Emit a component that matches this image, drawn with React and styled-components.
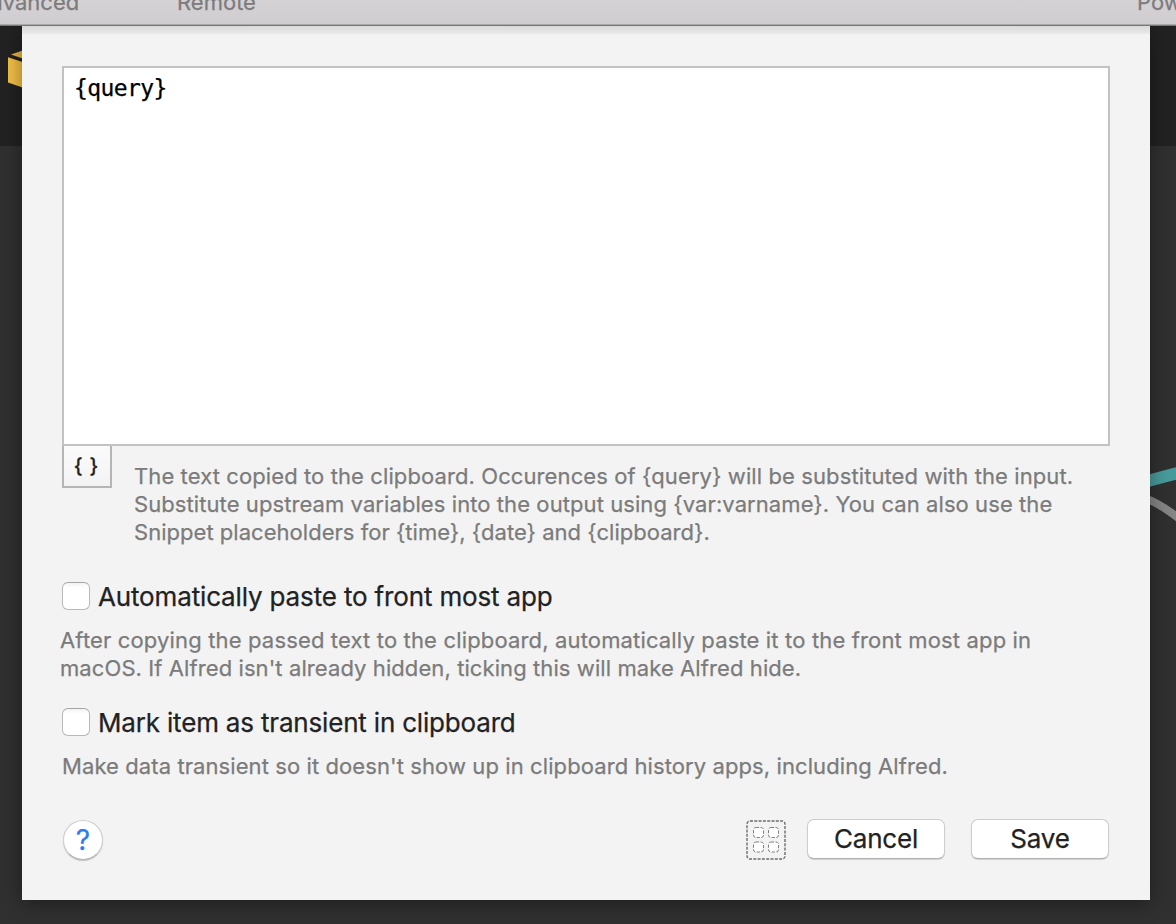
import React from "react";
import styled, { createGlobalStyle } from "styled-components";

const GlobalStyle = createGlobalStyle`
  * { box-sizing: border-box; }
  body {
    margin: 0;
    font-family: Inter, "Liberation Sans", sans-serif;
    font-weight: 400;
    -webkit-text-stroke: 0.25px currentColor;
  }
  button { font: inherit; padding: 0; margin: 0; }
`;

const Window = styled.div`
  position: relative;
  width: 1176px;
  height: 924px;
  overflow: hidden;
  display: flex;
  flex-direction: column;
  background: linear-gradient(#222 0 146px, #303030 146px);
`;

const Toolbar = styled.header`
  flex: none;
  height: 26px;
  display: flex;
  position: relative;
  z-index: 2;
  background: linear-gradient(#d5d2d5, #cfcdcf);
  border-bottom: 1px solid #777;
  box-shadow: inset 0 -1px 0 #aaa8aa;
`;

const Tab = styled.span`
  flex: none;
  width: ${(p) => p.$width}px;
  margin-top: -11px;
  margin-left: ${(p) => p.$offset || 0}px;
  font-size: 22px;
  line-height: 27px;
  color: #7d7b7d;
  white-space: nowrap;
`;

const Canvas = styled.svg`
  position: absolute;
  inset: 0;
`;

const Sheet = styled.main`
  position: relative;
  width: 1128px;
  height: 874px;
  margin-left: 22px;
  padding: 40px 40px 0;
  display: flex;
  flex-direction: column;
  background: linear-gradient(#dadada, #e1e1e1 4px, #ebebeb 8px, #f3f3f3 8px);
  box-shadow: 0 3px 20px rgba(0, 0, 0, 0.4);
`;

const Editor = styled.div`
  flex: none;
  height: 380px;
  width: 1048px;
  padding: 7px 10px;
  border: 2px solid #c2c2c2;
  background: #fff;
  color: #000;
  font: 23px/26px "DejaVu Sans Mono", monospace;
  letter-spacing: -0.6px;
`;

const EditorFooter = styled.div`
  display: flex;
  height: 136px;
`;

const Placeholder = styled.button`
  width: 50px;
  height: 42px;
  border: 2px solid #b5b5b5;
  border-top: 0;
  background: linear-gradient(#fbfbfb, #f3f3f3);
  color: #222;
  font-size: 20px;
  font-weight: 500;
  line-height: 40px;
  letter-spacing: 0.9px;
  padding-right: 1px;
`;

const Note = styled.div`
  margin: ${(p) => p.$margin || 0};
  color: #7b7b7b;
  font-size: 22px;
  line-height: 28px;
`;

const Line = styled.span`
  display: block;
  width: max-content;
  white-space: pre;
  letter-spacing: ${(p) => p.$track || 0}px;
`;

const Option = styled.label`
  display: flex;
  align-items: center;
  gap: 8px;
  height: 28px;
  color: #222;
  font-size: 26px;
  line-height: 30px;

  ${Line} { padding-top: 2px; }
`;

const Checkbox = styled.input`
  appearance: none;
  flex: none;
  width: 28px;
  height: 28px;
  margin: 0;
  border: 1px solid #b8b8b8;
  border-top-color: #a5a5a5;
  border-radius: 6px;
  background: linear-gradient(#f3f3f3, #fff 5px);
`;

const Actions = styled.footer`
  display: flex;
  align-items: center;
  height: 42px;
  margin-top: 39px;
  padding-right: 1px;
`;

const Help = styled.button`
  width: 40px;
  height: 40px;
  margin-left: 1px;
  margin-right: auto;
  border: 1px solid #cfcfcf;
  border-bottom-color: #b5b5b5;
  border-radius: 50%;
  background: #fff;
  box-shadow: 0 1px 1px rgba(0, 0, 0, 0.2);
  color: #2b7bf6;
  font-size: 28px;
  line-height: 38px;
`;

const PushButton = styled.button`
  width: 138px;
  height: 40px;
  margin-left: ${(p) => p.$gap}px;
  margin-bottom: 2px;
  border: 1px solid #cdcdcd;
  border-bottom-color: #b0b0b0;
  border-radius: 7px;
  background: #fff;
  box-shadow: 0 1px 1px rgba(0, 0, 0, 0.14);
  color: #222;
  font-size: 26px;
  line-height: 38px;
  letter-spacing: -0.2px;
`;

function Workflow() {
  return (
    <Canvas width="1176" height="924" fill="none">
      <path d="M11 54.5 24 50v9z" fill="#e8b641" />
      <path d="M8 57.3 24 62.5V88L8 82.5z" fill="#f2bf46" />
      <path d="M1148 481Q1162 477 1178 473" stroke="#489b9c" strokeWidth="12" />
      <path d="M1144 498Q1160 503 1182 521" stroke="#858585" strokeWidth="8" />
    </Canvas>
  );
}

function GridIcon() {
  const cells = [[7.5, 7.5], [22.5, 7.5], [7.5, 22], [22.5, 22]];
  return (
    <svg width="40" height="40" fill="none">
      <rect x="1" y="1" width="38" height="38" rx="3" stroke="#6c6c6c" strokeWidth="1.4" strokeDasharray="3 1.3" />
      {cells.map(([x, y]) => (
        <rect key={`${x}-${y}`} x={x} y={y} width="10" height="10" rx="2.4" fill="#fff" stroke="#808080" strokeDasharray="3.2 1.4" />
      ))}
    </svg>
  );
}

export default function App() {
  return (
    <>
      <GlobalStyle />
      <Window>
        <Workflow />
        <Toolbar>
          <Tab $width={203} $offset={-26}>Advanced</Tab>
          <Tab $width={960}>Remote</Tab>
          <Tab $width={140}>Powerpack</Tab>
        </Toolbar>
        <Sheet>
          <Editor>{"{query}"}</Editor>
          <EditorFooter>
            <Placeholder>{"{ }"}</Placeholder>
            <Note $margin="16px 0 0 22px">
              <Line $track={0.1}>{"The text copied to the clipboard. Occurences of {query} will be substituted with the input."}</Line>
              <Line $track={0.08}>{"Substitute upstream variables into the output using {var:varname}. You can also use the"}</Line>
              <Line $track={0.03}>{"Snippet placeholders for {time}, {date} and {clipboard}."}</Line>
            </Note>
          </EditorFooter>
          <Option>
            <Checkbox type="checkbox" />
            <Line $track={-0.15}>Automatically paste to front most app</Line>
          </Option>
          <Note $margin="16px 0 26px -2px">
            <Line $track={0.155}>After copying the passed text to the clipboard, automatically paste it to the front most app in</Line>
            <Line $track={0.09}>macOS. If Alfred isn't already hidden, ticking this will make Alfred hide.</Line>
          </Note>
          <Option>
            <Checkbox type="checkbox" />
            <Line $track={-0.18}>Mark item as transient in clipboard</Line>
          </Option>
          <Note $margin="16px 0 0">
            <Line $track={0.09}>Make data transient so it doesn't show up in clipboard history apps, including Alfred.</Line>
          </Note>
          <Actions>
            <Help aria-label="Help">?</Help>
            <GridIcon />
            <PushButton $gap={21}>Cancel</PushButton>
            <PushButton $gap={26}>Save</PushButton>
          </Actions>
        </Sheet>
      </Window>
    </>
  );
}
